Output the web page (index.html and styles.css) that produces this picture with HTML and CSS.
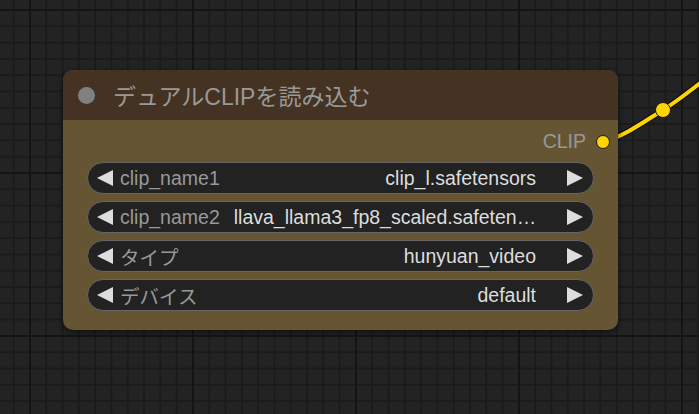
FILE: index.html
```html
<!DOCTYPE html>
<html lang="ja">
<head>
<meta charset="utf-8">
<title>デュアルCLIPを読み込む</title>
<link rel="stylesheet" href="styles.css">
</head>
<body>
<div class="canvas">
  <svg class="links" width="699" height="414" viewBox="0 0 699 414" aria-hidden="true">
    <path class="link-outline" d="M 603 142 C 625 136, 645 121, 663 110 S 690 90, 722 67"/>
    <path class="link" d="M 603 142 C 625 136, 645 121, 663 110 S 690 90, 722 67"/>
    <circle class="link-center" cx="663" cy="110" r="7.5"/>
  </svg>

  <div class="node">
    <div class="node-title">
      <span class="title-dot"></span>
      <span class="title-text">デュアルCLIPを読み込む</span>
    </div>
    <div class="node-body">
      <div class="output-row">
        <span class="output-label">CLIP</span>
        <span class="output-slot"></span>
      </div>
      <div class="widgets">
        <div class="widget">
          <span class="arrow arrow-left"></span>
          <span class="w-label">clip_name1</span>
          <span class="w-value">clip_l.safetensors</span>
          <span class="arrow arrow-right"></span>
        </div>
        <div class="widget">
          <span class="arrow arrow-left"></span>
          <span class="w-label">clip_name2</span>
          <span class="w-value">llava_llama3_fp8_scaled.safeten…</span>
          <span class="arrow arrow-right"></span>
        </div>
        <div class="widget">
          <span class="arrow arrow-left"></span>
          <span class="w-label">タイプ</span>
          <span class="w-value">hunyuan_video</span>
          <span class="arrow arrow-right"></span>
        </div>
        <div class="widget">
          <span class="arrow arrow-left"></span>
          <span class="w-label">デバイス</span>
          <span class="w-value">default</span>
          <span class="arrow arrow-right"></span>
        </div>
      </div>
    </div>
  </div>
</div>
</body>
</html>
```

FILE: styles.css
```css
html, body {
  margin: 0;
  padding: 0;
  width: 100%;
  height: 100%;
  overflow: hidden;
}

body {
  font-family: "Liberation Sans", "Noto Sans CJK JP", sans-serif;
}

.canvas {
  position: relative;
  width: 699px;
  height: 414px;
  background-color: #232323;
  background-image:
    linear-gradient(to right, #141414 2px, transparent 2px),
    linear-gradient(to bottom, #141414 2px, transparent 2px),
    linear-gradient(to right, #1b1b1b 2px, transparent 2px),
    linear-gradient(to bottom, #1b1b1b 2px, transparent 2px);
  background-size: 163px 100%, 100% 163px, 16.3px 100%, 100% 16.3px;
  background-position: 29px 0, 0 9px, 29px 0, 0 9px;
}

.links {
  position: absolute;
  left: 0;
  top: 0;
}

.link-outline {
  fill: none;
  stroke: #111;
  stroke-width: 6.5;
  stroke-linecap: round;
}

.link {
  fill: none;
  stroke: #ffd500;
  stroke-width: 4;
  stroke-linecap: round;
}

.link-center {
  fill: #ffd500;
  stroke: #1a1a1a;
  stroke-width: 1;
}

.node {
  position: absolute;
  left: 63px;
  top: 70px;
  width: 555px;
  height: 260px;
  border-radius: 10px;
  background: #665533;
  box-shadow: 0 2px 6px rgba(0, 0, 0, 0.55);
  display: flex;
  flex-direction: column;
  overflow: hidden;
}

.node-title {
  height: 50px;
  background: #443322;
  display: flex;
  align-items: center;
  padding-left: 15px;
  box-sizing: border-box;
}

.title-dot {
  width: 17px;
  height: 17px;
  border-radius: 50%;
  background: #808080;
  margin-right: 18px;
  flex: none;
}

.title-text {
  color: #999;
  font-size: 23px;
  white-space: nowrap;
}

.node-body {
  flex: 1;
  display: flex;
  flex-direction: column;
  padding: 10px 24px 0 24px;
}

.output-row {
  height: 23px;
  margin-bottom: 9px;
  margin-right: -16px;
  display: flex;
  align-items: center;
  justify-content: flex-end;
}

.output-label {
  color: #999;
  font-size: 19.5px;
  margin-right: 10px;
}

.output-slot {
  width: 12px;
  height: 12px;
  border-radius: 50%;
  background: #ffd500;
  border: 1.5px solid #1a1a1a;
  flex: none;
}

.widgets {
  display: flex;
  flex-direction: column;
  gap: 7px;
}

.widget {
  height: 32px;
  box-sizing: border-box;
  border: 1.5px solid #666;
  border-radius: 16px;
  background: #222;
  display: flex;
  align-items: center;
  padding: 0 10px 0 9px;
  font-size: 19.5px;
  white-space: nowrap;
}

.arrow {
  width: 0;
  height: 0;
  border-top: 8px solid transparent;
  border-bottom: 8px solid transparent;
  flex: none;
}

.arrow-left {
  border-right: 16px solid #ddd;
  margin-right: 7px;
}

.arrow-right {
  border-left: 16px solid #ddd;
  margin-left: 31px;
}

.w-label {
  color: #999;
  flex: none;
}

.w-value {
  color: #ddd;
  flex: 1;
  text-align: right;
  overflow: hidden;
  margin-left: 14px;
}
```
